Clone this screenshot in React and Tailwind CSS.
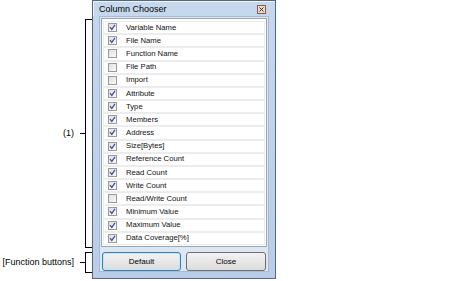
import React from 'react';

const columns = [
  ['Variable Name', true],
  ['File Name', true],
  ['Function Name', false],
  ['File Path', false],
  ['Import', false],
  ['Attribute', true],
  ['Type', true],
  ['Members', true],
  ['Address', true],
  ['Size[Bytes]', true],
  ['Reference Count', true],
  ['Read Count', true],
  ['Write Count', true],
  ['Read/Write Count', false],
  ['Minimum Value', true],
  ['Maximum Value', true],
  ['Data Coverage[%]', true],
];

const CheckBox = ({ checked }) => (
  <div className="w-[9px] h-[9px] border border-[#9a9a9a] bg-gradient-to-br from-[#dedede] to-[#fbfbfb] flex items-center justify-center shrink-0">
    {checked && (
      <svg width="7" height="7" viewBox="0 0 7 7">
        <path d="M1 3.2 L2.8 5.4 L6 0.8" fill="none" stroke="#3a4f9c" strokeWidth="1.2" />
      </svg>
    )}
  </div>
);

const Bracket = ({ label, className }) => (
  <div className={`flex items-center justify-end ${className}`}>
    <span className="text-[9px] text-black leading-none mr-[6px]">{label}</span>
    <div className="w-[5px] h-px bg-black" />
    <div className="w-[7px] h-full border-y border-l border-black" />
  </div>
);

export default function App() {
  return (
    <div className="w-[474px] h-[281px] bg-white flex font-['Liberation_Sans',Arial,sans-serif] overflow-hidden">
      <div className="w-[92px] flex flex-col">
        <div className="h-[19px]" />
        <Bracket label="(1)" className="h-[229px]" />
        <div className="h-[4px]" />
        <Bracket label="[Function buttons]" className="h-[21px]" />
      </div>

      <div className="w-[184px] h-[279px] border border-[#56657a] bg-gradient-to-b from-[#c6d8ee] to-[#b9cde8] flex flex-col">
        <div className="h-[19px] flex items-center justify-between pl-[5px] pr-[9px] border-t border-l border-[#eef4fb]">
          <span className="text-[9px] text-black leading-none">Column Chooser</span>
          <div className="w-[9px] h-[9px] border border-[#8a5a4a] bg-[#e9dccb] flex items-center justify-center">
            <svg width="5" height="5" viewBox="0 0 5 5">
              <path d="M0.5 0.5 L4.5 4.5 M4.5 0.5 L0.5 4.5" stroke="#3a2a2a" strokeWidth="1" />
            </svg>
          </div>
        </div>
        <div className="flex-1 mx-[6px] mb-[6px] bg-[#dde7f3] border border-[#a9bbd3] flex flex-col px-[1px] pt-[1px]">
          <div className="h-[229px] bg-white border border-[#9aa6b4] flex flex-col p-[1px] pt-[2px]">
            {columns.map(([name, checked]) => (
              <div key={name} className="h-[13.25px] flex items-center border border-[#ececec] bg-white pl-[4px] gap-[9px]">
                <CheckBox checked={checked} />
                <span className="text-[7.7px] text-[#111] leading-none">{name}</span>
              </div>
            ))}
          </div>
          <div className="flex gap-[5px] mt-[5px] px-[1px]">
            <button className="w-[79px] h-[19px] rounded-[3px] border border-[#3c7fb1] bg-gradient-to-b from-[#f4f4f4] to-[#dcdcdc] text-[8px] text-black leading-none shadow-[inset_0_0_0_1px_#bde6f8]">
              Default
            </button>
            <button className="w-[80px] h-[19px] rounded-[3px] border border-[#707070] bg-gradient-to-b from-[#f2f2f2] to-[#dcdcdc] text-[8px] text-black leading-none">
              Close
            </button>
          </div>
        </div>
      </div>
    </div>
  );
}
